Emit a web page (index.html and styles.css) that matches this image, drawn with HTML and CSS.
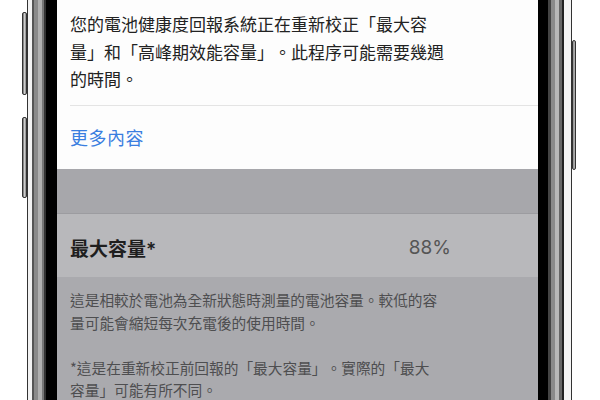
FILE: index.html
```html
<!DOCTYPE html>
<html lang="zh-Hant-TW">
<head>
  <meta charset="utf-8">
  <title>電池健康度</title>
  <link rel="stylesheet" href="styles.css">
</head>
<body>
  <div class="phone">
    <div class="keys keys-left">
      <span class="key key-up"></span>
      <span class="key key-down"></span>
    </div>
    <div class="bezel bezel-left"></div>
    <div class="screen">
      <section class="notice">
        <p class="notice-text">您的電池健康度回報系統正在重新校正「最大容量」和「高峰期效能容量」。此程序可能需要幾週的時間。</p>
        <div class="notice-more"><a href="#">更多內容</a></div>
      </section>
      <div class="group-gap"></div>
      <div class="cell">
        <span class="cell-title">最大容量*</span>
        <span class="cell-value">88%</span>
      </div>
      <div class="footnote">
        <p>這是相較於電池為全新狀態時測量的電池容量。較低的容量可能會縮短每次充電後的使用時間。</p>
        <p>*這是在重新校正前回報的「最大容量」。實際的「最大容量」可能有所不同。</p>
      </div>
    </div>
    <div class="bezel bezel-right"></div>
    <div class="keys keys-right">
      <span class="key key-power"></span>
    </div>
  </div>
</body>
</html>
```

FILE: styles.css
```css
    body {
      margin: 0;
      padding: 0;
      background-color: #fff;
      font-family: "Inter", "Noto Sans CJK TC", sans-serif;
      -webkit-locale: "zh-TW";
    }
    .phone {
      display: flex;
      width: 600px;
      height: 400px;
      overflow: hidden;
      padding-left: 22px;
      box-sizing: border-box;
    }
    .keys {
      display: flex;
      flex-direction: column;
      width: 5px;
      flex: none;
    }
    .key {
      display: block;
      flex: none;
      box-sizing: border-box;
      border: 1px solid #333;
      border-radius: 2px;
      background: linear-gradient(to right, #666, #ccc 50%, #888);
    }
    .key-up {
      margin-top: 12px;
      height: 83px;
    }
    .key-down {
      margin-top: 22px;
      height: 81px;
    }
    .keys-right {
      width: 4px;
    }
    .key-power {
      margin-top: 40px;
      height: 130px;
    }
    .bezel {
      flex: none;
      height: 100%;
    }
    .bezel-left {
      width: 30px;
      background: linear-gradient(to right,
        #333 0, #333 1px,
        #f2f2f2 1px, #f2f2f2 5px,
        #555 5px, #555 7px,
        #8a8a8a 7px, #8a8a8a 11px,
        #b0b0b0 11px, #b0b0b0 15px,
        #777 15px, #777 17px,
        #333 17px, #333 19px,
        #000 19px);
    }
    .bezel-right {
      width: 34px;
      background: linear-gradient(to right,
        #000 0, #000 10px,
        #444 10px, #444 13px,
        #8a8a8a 13px, #8a8a8a 17px,
        #b8b8b8 17px, #b8b8b8 21px,
        #666 21px, #666 24px,
        #222 24px, #222 26px,
        #f4f4f4 26px, #f4f4f4 33px,
        #333 33px);
    }
    .screen {
      flex: none;
      width: 481px;
      height: 100%;
      background-color: #aaaaae;
      display: flex;
      flex-direction: column;
    }
    .screen > * {
      flex: none;
    }
    .notice {
      background-color: #fdfdfd;
      height: 169px;
      padding-top: 10px;
      box-sizing: border-box;
    }
    .notice-text {
      margin: 0 0 12px 13px;
      width: 382px;
      font-family: "Noto Sans CJK TC", sans-serif;
      font-size: 17px;
      line-height: 27.5px;
      color: #222;
      text-spacing-trim: space-all;
    }
    .notice-more {
      margin-left: 13px;
      border-top: 1px solid #e4e4e4;
      height: 63px;
      display: flex;
      align-items: center;
    }
    .notice-more a {
      font-family: "Noto Sans CJK TC", sans-serif;
      font-size: 18px;
      color: #3a7ee0;
      text-decoration: none;
      letter-spacing: 0.5px;
    }
    .group-gap {
      height: 44px;
      background-color: #a7a7ab;
      border-bottom: 1px solid #9c9ca0;
    }
    .cell {
      height: 63px;
      background-color: #b8b8bb;
      display: flex;
      align-items: center;
      justify-content: space-between;
      padding: 3px 87px 0 13px;
      box-sizing: border-box;
    }
    .cell-title {
      font-size: 19px;
      font-weight: 600;
      color: #1e1e1e;
    }
    .cell-value {
      font-size: 19px;
      color: #555;
    }
    .footnote {
      padding: 12px 0 0 13px;
    }
    .footnote p {
      margin: 0 0 22.5px 0;
      width: 372px;
      font-family: "Noto Sans CJK TC", sans-serif;
      font-size: 14.7px;
      line-height: 22.5px;
      color: #4e4e50;
      text-spacing-trim: space-all;
    }
```
